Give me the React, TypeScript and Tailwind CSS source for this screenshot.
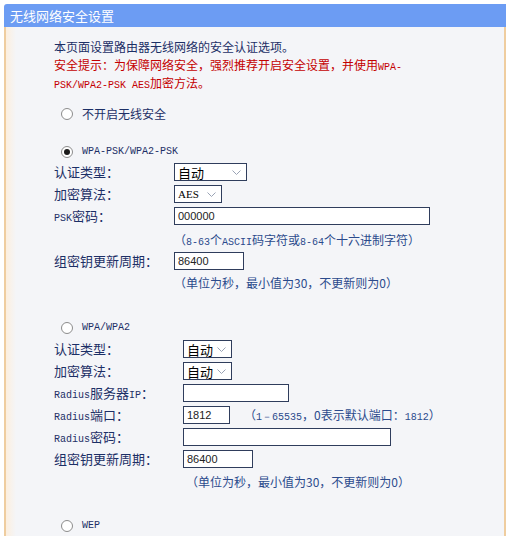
import React from "react";

const cjk = "font-['Noto_Sans_CJK_SC',sans-serif]";
const mono = "font-['Liberation_Mono',monospace] text-[10px] leading-none";

function M({ children }: { children: React.ReactNode }) {
  return <span className={mono}>{children}</span>;
}

function Chevron() {
  return (
    <svg width="9" height="5" viewBox="0 0 9 5" className="shrink-0">
      <path d="M0.5 0.5 L4.5 4.5 L8.5 0.5" fill="none" stroke="#9aa3b5" strokeWidth="1" />
    </svg>
  );
}

function Select({ w, label, mono: isMono }: { w: string; label: string; mono?: boolean }) {
  return (
    <div
      className={`${w} h-[18px] flex items-center justify-between border border-[#2f3d5c] bg-white pl-[3px] pr-[5px] text-[13px] leading-none text-black`}
    >
      <span className={isMono ? "font-['Liberation_Serif',serif] text-[11px]" : ""}>{label}</span>
      <Chevron />
    </div>
  );
}

function Input({ w, value }: { w: string; value?: string }) {
  return (
    <div
      className={`${w} h-[18px] flex items-center border border-[#2f3d5c] bg-white px-[3px] font-['Liberation_Sans',sans-serif] text-[11px] text-[#222]`}
    >
      {value}
    </div>
  );
}

function Radio({ checked }: { checked?: boolean }) {
  return (
    <span className="w-[12px] h-[12px] rounded-full border border-[#8c8c8c] bg-white flex items-center justify-center shrink-0">
      {checked && <span className="w-[6px] h-[6px] rounded-full bg-[#1a1a1a]" />}
    </span>
  );
}

function Row({
  label,
  lw,
  mt,
  children,
}: {
  label: React.ReactNode;
  lw: string;
  mt: string;
  children: React.ReactNode;
}) {
  return (
    <div className={`flex items-center h-[18px] ${mt}`}>
      <div className={`${lw} shrink-0 text-[13px] text-[#1c2f66]`}>{label}</div>
      {children}
    </div>
  );
}

export default function App() {
  return (
    <div className={`w-[509px] h-[536px] bg-white pt-[4px] pl-[4px] pr-[3px] overflow-hidden ${cjk}`}>
      <div className="h-[23px] bg-[#6c9cf3] rounded-tl-[3px] flex items-center pl-[6px] text-[13px] text-white">
        无线网络安全设置
      </div>
      <div className="h-[509px] border-l-2 border-r-2 border-[#efcd9f] bg-[linear-gradient(to_right,#fcefdf_0px,#f4f5f8_10px)] pl-[48px] pt-[11px] leading-[18px]">
        <div className="h-[18px] text-[12px] text-[#1c2f66]">本页面设置路由器无线网络的安全认证选项。</div>
        <div className="h-[18px] text-[12px] text-[#c40000]">
          安全提示：为保障网络安全，强烈推荐开启安全设置，并使用<M>WPA-</M>
        </div>
        <div className="h-[18px] text-[12px] text-[#c40000]">
          <M>PSK/WPA2-PSK AES</M>加密方法。
        </div>

        <div className="flex items-center h-[18px] mt-[13px] pl-[7px] gap-[9px] text-[12px] text-[#1c2f66]">
          <Radio />
          <span>不开启无线安全</span>
        </div>

        <div className="flex items-center h-[18px] mt-[20px] pl-[7px] gap-[9px] text-[#1c2f66]">
          <Radio checked />
          <M>WPA-PSK/WPA2-PSK</M>
        </div>

        <Row label="认证类型：" lw="w-[120px]" mt="mt-[2px]">
          <Select w="w-[73px]" label="自动" />
        </Row>
        <Row label="加密算法：" lw="w-[120px]" mt="mt-[4px]">
          <Select w="w-[48px]" label="AES" mono />
        </Row>
        <Row
          label={
            <>
              <M>PSK</M>密码：
            </>
          }
          lw="w-[120px]"
          mt="mt-[4px]"
        >
          <Input w="w-[256px]" value="000000" />
        </Row>
        <div className="pl-[120px] mt-[6px] h-[18px] text-[12px] text-[#2b4a8c]">
          （<M>8-63</M>个<M>ASCII</M>码字符或<M>8-64</M>个十六进制字符）
        </div>
        <Row label="组密钥更新周期：" lw="w-[120px]" mt="mt-[3px]">
          <Input w="w-[70px]" value="86400" />
        </Row>
        <div className="pl-[120px] mt-[4px] h-[18px] text-[12px] text-[#2b4a8c]">
          （单位为秒，最小值为30，不更新则为0）
        </div>

        <div className="flex items-center h-[18px] mt-[27px] pl-[7px] gap-[9px] text-[#1c2f66]">
          <Radio />
          <M>WPA/WPA2</M>
        </div>

        <Row label="认证类型：" lw="w-[129px]" mt="mt-[3px]">
          <Select w="w-[49px]" label="自动" />
        </Row>
        <Row label="加密算法：" lw="w-[129px]" mt="mt-[4px]">
          <Select w="w-[49px]" label="自动" />
        </Row>
        <Row
          label={
            <>
              <M>Radius</M>服务器<M>IP</M>：
            </>
          }
          lw="w-[129px]"
          mt="mt-[4px]"
        >
          <Input w="w-[106px]" />
        </Row>
        <Row
          label={
            <>
              <M>Radius</M>端口：
            </>
          }
          lw="w-[129px]"
          mt="mt-[4px]"
        >
          <Input w="w-[47px]" value="1812" />
          <span className="ml-[14px] text-[12px] text-[#2b4a8c]">
            （<M>1－65535</M>，0表示默认端口：<M>1812</M>）
          </span>
        </Row>
        <Row
          label={
            <>
              <M>Radius</M>密码：
            </>
          }
          lw="w-[129px]"
          mt="mt-[4px]"
        >
          <Input w="w-[208px]" />
        </Row>
        <Row label="组密钥更新周期：" lw="w-[129px]" mt="mt-[4px]">
          <Input w="w-[70px]" value="86400" />
        </Row>
        <div className="pl-[132px] mt-[5px] h-[18px] text-[12px] text-[#2b4a8c]">
          （单位为秒，最小值为30，不更新则为0）
        </div>

        <div className="flex items-center h-[18px] mt-[26px] pl-[7px] gap-[9px] text-[#1c2f66]">
          <Radio />
          <M>WEP</M>
        </div>
      </div>
    </div>
  );
}
